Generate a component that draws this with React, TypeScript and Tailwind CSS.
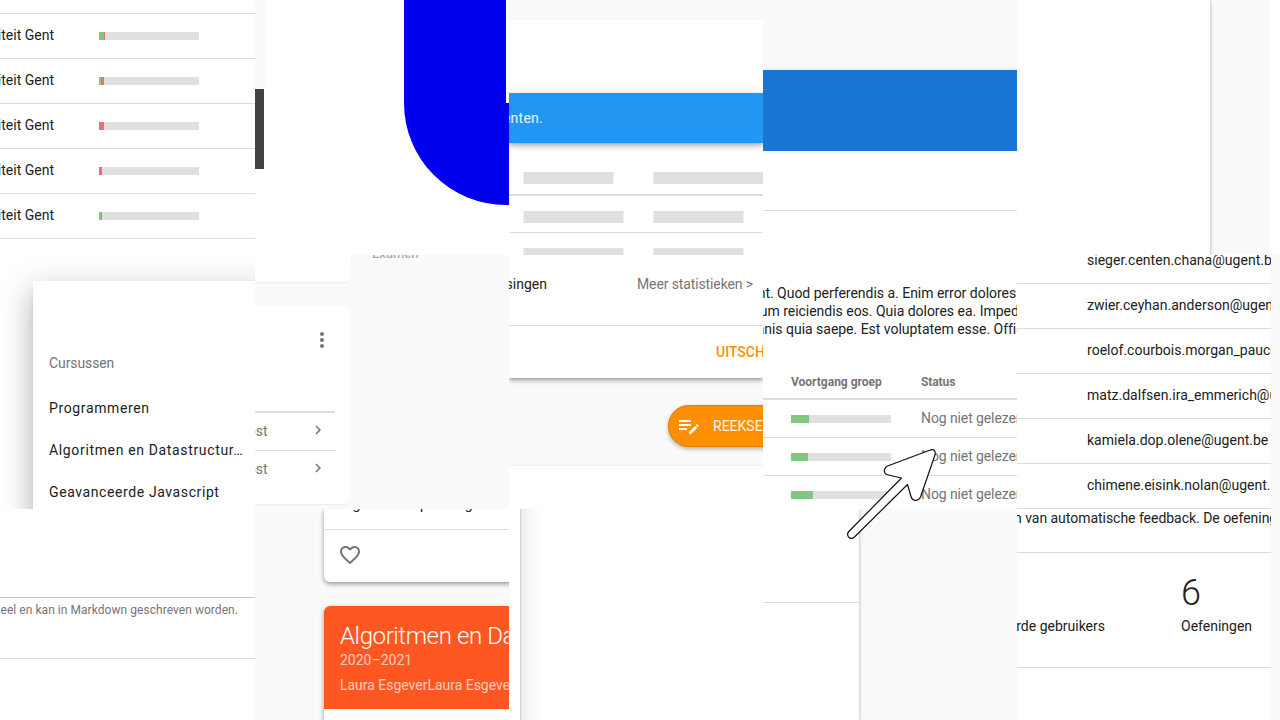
import React from "react";

function Tile({ className = "", children }: { className?: string; children?: React.ReactNode }) {
  return <div className={`min-w-0 overflow-hidden ${className}`}>{children}</div>;
}

function Bar({ good, bad = 0 }: { good: number; bad?: number }) {
  return (
    <div className="flex h-2 w-[100px] shrink-0 bg-[#e0e0e0]">
      <div className="bg-[#81c784]" style={{ width: good }} />
      <div className="bg-[#e57373]" style={{ width: bad }} />
    </div>
  );
}

function InstitutionTable() {
  const rows = [[5, 1], [2, 3], [0, 5], [0, 3], [2, 1]];
  return (
    <Tile className="bg-white">
      <div className="h-[14px] border-b border-[#dddddd]" />
      {rows.map(([good, bad], i) => (
        <div key={i} className="flex h-[45px] items-center border-b border-[#dddddd]">
          <div className="flex w-[54px] shrink-0 justify-end pb-[2px] whitespace-nowrap">Universiteit Gent</div>
          <div className="ml-[45px]"><Bar good={good} bad={bad} /></div>
        </div>
      ))}
      <div className="flex w-[54px] justify-end pt-[12px] whitespace-nowrap">Universiteit Gent</div>
    </Tile>
  );
}

function LogoPanel() {
  return (
    <Tile className="flex bg-white">
      <div className="w-[10px] shrink-0">
        <div className="h-[89px] bg-[#fafafa]" />
        <div className="h-20 w-[9px] bg-[#424242]" />
      </div>
      <div className="ml-[139px] w-[105px] shrink-0">
        <div className="h-[103px] w-[102px] bg-[#0000ee]" />
        <div className="h-[102px] w-[105px] rounded-bl-[102px] bg-[#0000ee]" />
      </div>
    </Tile>
  );
}

function LoadingTable() {
  return (
    <Tile className="bg-[#fafafa] pt-5">
      <div className="h-[240px] bg-white pt-[73px] shadow-[0_1px_3px_rgba(0,0,0,0.1)]">
        <div className="flex h-[50px] items-center bg-[#2196f3] text-white/90 shadow-[0_2px_4px_-1px_rgba(0,0,0,0.2),0_4px_5px_rgba(0,0,0,0.14),0_1px_10px_rgba(0,0,0,0.12)]">
          <div className="flex w-[34px] justify-end whitespace-nowrap tracking-[0.25px]">studenten.</div>
        </div>
        <div className="flex h-[53px] gap-10 border-b-2 border-[#dddddd] pt-[29px] pl-[14px]">
          <div className="h-3 w-[90px] shrink-0 transform-[translateX(0.5px)] bg-[#e0e0e0]" />
          <div className="h-3 w-[120px] shrink-0 transform-[translateX(0.5px)] bg-[#e0e0e0]" />
        </div>
        <div className="flex h-[37px] gap-[30px] border-b border-[#dddddd] pt-[15px] pl-[14px]">
          <div className="h-3 w-[100px] transform-[translateX(0.5px)] bg-[#e0e0e0]" />
          <div className="h-3 w-[90px] transform-[translateX(0.5px)] bg-[#e0e0e0]" />
        </div>
        <div className="flex gap-[30px] pt-[15px] pl-[14px]">
          <div className="h-3 w-[100px] transform-[translateX(0.5px)] bg-[#e0e0e0]" />
          <div className="h-3 w-[90px] transform-[translateX(0.5px)] bg-[#e0e0e0]" />
        </div>
      </div>
    </Tile>
  );
}

function HeaderCard() {
  return (
    <Tile className="bg-[#fafafa] pt-[70px]">
      <div className="h-[240px] bg-white shadow-[0_1px_8px_rgba(0,0,0,0.12)]">
        <div className="h-[81px] bg-[#1976d2]" />
        <div className="h-[60px] border-b border-[#dddddd]" />
      </div>
    </Tile>
  );
}

function CourseMenu() {
  return (
    <Tile className="bg-white pt-[26px] pl-[33px]">
      <div className="h-[300px] w-[260px] bg-white pt-[61px] pl-4 shadow-[0_8px_10px_-5px_rgba(0,0,0,0.2),0_16px_24px_2px_rgba(0,0,0,0.14),0_6px_30px_5px_rgba(0,0,0,0.12)]">
        <div className="h-[42px] leading-[42px] text-[#757575] tracking-[-0.1px]">Cursussen</div>
        <div className="mt-[3px] h-[42px] leading-[42px] tracking-[0.63px]">Programmeren</div>
        <div className="h-[42px] leading-[42px] tracking-[0.65px]">Algoritmen en Datastructur…</div>
        <div className="h-[42px] leading-[42px] tracking-[0.6px]">Geavanceerde Javascript</div>
      </div>
    </Tile>
  );
}

function Chevron() {
  return (
    <svg viewBox="0 0 24 24" className="h-[18px] w-[18px] fill-[#757575]">
      <path d="M8.59 16.58 13.17 12 8.59 7.41 10 6l6 6-6 6-1.41-1.42z" />
    </svg>
  );
}

function SeriesCards() {
  return (
    <Tile className="flex bg-[#fafafa]">
      <div className="w-24 shrink-0">
        <div className="h-[27px] rounded-br-md bg-white shadow-[0_1px_2px_rgba(0,0,0,0.06)]" />
        <div className="mt-6 h-[198px] rounded-r-md bg-white pr-4 shadow-[0_1px_2px_rgba(0,0,0,0.06)]">
          <div className="flex h-[107px] justify-end border-b-2 border-[#dddddd] pt-[22px]">
            <svg viewBox="0 0 24 24" className="mr-[1px] h-6 w-6 fill-[#757575]">
              <path d="M12 16a2 2 0 1 1 0 4 2 2 0 0 1 0-4m0-6a2 2 0 1 1 0 4 2 2 0 0 1 0-4m0-6a2 2 0 1 1 0 4 2 2 0 0 1 0-4" />
            </svg>
          </div>
          {[0, 1].map((i) => (
            <div key={i} className={`flex h-[38px] items-center pb-[2px] text-[#757575] ${i === 0 ? "border-b border-[#dddddd]" : ""}`}>
              <div className="flex w-[12.6px] shrink-0 justify-end">post</div>
              <div className="ml-[41.4px] pb-[2px]"><Chevron /></div>
            </div>
          ))}
        </div>
      </div>
      <div className="-mt-[10px] ml-[21px] h-5 text-[13px] leading-[18px] font-medium text-[#ababab]">Examen</div>
    </Tile>
  );
}

function StatisticsCard() {
  return (
    <Tile className="bg-[#fafafa]">
      <div className="h-[123px] bg-white shadow-[0_2px_5px_rgba(0,0,0,0.42)]">
        <div className="flex h-[71px] items-start border-b border-[#dddddd] pt-[19px] leading-5 whitespace-nowrap">
          <div className="flex w-[38px] shrink-0 justify-end">oplossingen</div>
          <div className="ml-[90px] tracking-[-0.12px] text-[#757575]">Meer statistieken &gt;</div>
        </div>
        <div className="pt-4 pl-[207px] leading-5 font-medium text-[#ff8f00]">UITSCHRIJVEN</div>
      </div>
      <div className="mt-[27px] ml-[159px] flex h-[42px] w-[200px] items-center rounded-full bg-[#ff8f00] pl-[9px] text-white/90 shadow-[inset_0_0_0_1px_rgba(0,0,0,0.12),0_2px_4px_rgba(0,0,0,0.3)]">
        <svg viewBox="0 0 24 24" className="h-6 w-6 shrink-0 fill-white">
          <path d="M2 6v2h12V6H2m0 4v2h12v-2H2m18.04.13c-.14 0-.27.06-.38.17l-1 1 2.05 2 1-1c.22-.21.22-.56 0-.77l-1.28-1.23a.53.53 0 0 0-.39-.17m-1.97 1.75L12 17.94V20h2.06l6.06-6.12-2.05-2M2 14v2h8v-2H2z" />
        </svg>
        <span className="ml-3">REEKSEN</span>
      </div>
      <div className="mt-[19px] h-20 bg-white shadow-[0_0_3px_rgba(0,0,0,0.1)]" />
    </Tile>
  );
}

function GroupTable() {
  return (
    <Tile className="bg-white">
      <div className="mt-[29px] flex h-[54px] w-[254px] flex-col leading-[18px] tracking-[-0.02px] whitespace-nowrap">
        <div className="-ml-[13px]">unt. Quod perferendis a. Enim error dolores</div>
        <div className="-ml-[8px]">rum reiciendis eos. Quia dolores ea. Impedit</div>
        <div className="-ml-[11px]">mnis quia saepe. Est voluptatem esse. Officiis</div>
      </div>
      <div className="mt-[25px] flex h-[37px] items-center border-b-2 border-[#dddddd] pt-[2px] pl-7 text-xs font-bold text-[#757575]">
        <div className="w-[130px]">Voortgang groep</div>
        <div className="tracking-[-0.1px]">Status</div>
      </div>
      {[18, 17, 22].map((n, i) => (
        <div key={i} className="flex h-[38px] items-center border-b border-[#dddddd] pl-7 whitespace-nowrap text-[#757575]">
          <div className="w-[130px] shrink-0"><Bar good={n} /></div>
          <div className="pb-[2px] tracking-[-0.1px]">Nog niet gelezen</div>
        </div>
      ))}
    </Tile>
  );
}

function EmailTable() {
  const mails = [
    "sieger.centen.chana@ugent.be",
    "zwier.ceyhan.anderson@ugent.be",
    "roelof.courbois.morgan_paucek@ugent.be",
    "matz.dalfsen.ira_emmerich@ugent.be",
    "kamiela.dop.olene@ugent.be",
    "chimene.eisink.nolan@ugent.be",
  ];
  return (
    <Tile className="bg-white">
      <div className="-mt-4">
        {mails.map((m) => (
          <div key={m} className="h-[45px] border-b border-[#dddddd] pl-[70px] leading-[43px] tracking-[0.02px] whitespace-nowrap">{m}</div>
        ))}
      </div>
    </Tile>
  );
}

function DescriptionForm() {
  return (
    <Tile className="bg-white">
      <div className="h-[89px] border-b border-[#c6c6c6]" />
      <div className="flex h-[61px] w-full border-b border-[#dddddd] pt-[3px] text-xs leading-[18px] tracking-[0.05px] whitespace-nowrap text-[#757575]">
        <div className="flex w-[238px] justify-end">De beschrijving is optioneel en kan in Markdown geschreven worden.</div>
      </div>
    </Tile>
  );
}

function CourseCards() {
  return (
    <Tile className="bg-[#fafafa] pl-[69px]">
      <div className="h-[73px] w-[240px] rounded-b-md bg-white shadow-[0_2px_5px_rgba(0,0,0,0.4)]">
        <div className="h-[21px] border-b border-[#dddddd] pl-4">
          <div className="-mt-[15px] inline-block h-5 align-top leading-5">Algoritmen oplossing</div>
        </div>
        <svg viewBox="0 0 24 24" className="mt-[13px] ml-[14px] h-6 w-6 fill-[#757575]">
          <path d="m12.1 18.55-.1.1-.11-.1C7.14 14.24 4 11.39 4 8.5 4 6.5 5.5 5 7.5 5c1.54 0 3.04 1 3.57 2.36h1.86C13.46 6 14.96 5 16.5 5c2 0 3.5 1.5 3.5 3.5 0 2.89-3.14 5.74-7.9 10.05M16.5 3c-1.74 0-3.41.81-4.5 2.08C10.91 3.81 9.24 3 7.5 3 4.42 3 2 5.41 2 8.5c0 3.77 3.4 6.86 8.55 11.53L12 21.35l1.45-1.32C18.6 15.36 22 12.27 22 8.5 22 5.41 19.58 3 16.5 3z" />
        </svg>
      </div>
      <div className="mt-6 h-[200px] w-[240px] rounded-t-md bg-white shadow-[0_2px_5px_rgba(0,0,0,0.4)]">
        <div className="h-[103px] rounded-t-md bg-[#ff5722] pt-[14px] pl-4 whitespace-nowrap">
          <div className="text-2xl leading-8 font-light tracking-[-0.38px] text-white">Algoritmen en Datastructuren</div>
          <div className="leading-4 text-white/70">2020–2021</div>
          <div className="mt-[7px] leading-5 tracking-[-0.02px] text-white/70">Laura EsgeverLaura Esgever</div>
        </div>
      </div>
    </Tile>
  );
}

function DrawerEdge() {
  return (
    <Tile className="bg-white">
      <div className="-mt-20 h-[600px] w-[11px] bg-white shadow-[0_0_2px_rgba(0,0,0,0.35),0_0_24px_rgba(0,0,0,0.2)]" />
    </Tile>
  );
}

function SidePanel() {
  return (
    <Tile className="bg-[#fafafa]">
      <div className="h-full w-24 bg-white shadow-[0_1px_4px_rgba(0,0,0,0.3)]">
        <div className="h-[94px] border-b border-[#dddddd]" />
      </div>
    </Tile>
  );
}

function Totals() {
  return (
    <Tile className="bg-white">
      <div className="flex h-11 w-[254px] justify-start border-b border-[#dddddd] leading-[18px] whitespace-nowrap">
        <div className="-ml-[3px] tracking-[-0.03px]">n van automatische feedback. De oefeningen</div>
      </div>
      <div className="flex h-[115px] border-b border-[#dddddd] pt-[18px]">
        <div className="flex w-[88px] shrink-0 justify-end pt-[45px] leading-5 whitespace-nowrap">Geregistreerde gebruikers</div>
        <div className="ml-[76px]">
          <div className="h-[45px] text-4xl leading-[45px] font-light">6</div>
          <div className="leading-5">Oefeningen</div>
        </div>
      </div>
    </Tile>
  );
}

export default function App() {
  return (
    <div className="relative grid h-[720px] w-[1280px] grid-cols-[255px_254px_254px_254px_254px_9px] grid-rows-[255px_254px_211px] overflow-hidden bg-[#fafafa] font-['Roboto',sans-serif] text-sm leading-5 text-[#212121]">
      <InstitutionTable />
      <LogoPanel />
      <LoadingTable />
      <HeaderCard />
      <Tile className="bg-[#fafafa]">
        <div className="h-full w-[193px] bg-white shadow-[0_1px_4px_rgba(0,0,0,0.3)]" />
      </Tile>
      <div className="bg-white" />
      <CourseMenu />
      <SeriesCards />
      <StatisticsCard />
      <GroupTable />
      <EmailTable />
      <div />
      <DescriptionForm />
      <CourseCards />
      <DrawerEdge />
      <SidePanel />
      <Totals />
      <div />
      <svg viewBox="0 0 100 100" className="absolute top-[445px] left-[843px] h-[100px] w-[100px]">
        <path
          d="M5.8 86.5 58.5 33 43.5 29.5Q40.5 27.5 41.5 24.5Q42.2 22 44.5 21L88 4.8Q92.5 4 92.3 9L77.5 52Q76 55.5 72 55.3Q69 55 68 51.5L64.5 39.5 11.5 92Q8 95 5.5 91.8Q3.5 89 5.8 86.5Z"
          fill="white"
          stroke="#111111"
          strokeWidth="1.2"
          strokeLinejoin="round"
        />
      </svg>
    </div>
  );
}
